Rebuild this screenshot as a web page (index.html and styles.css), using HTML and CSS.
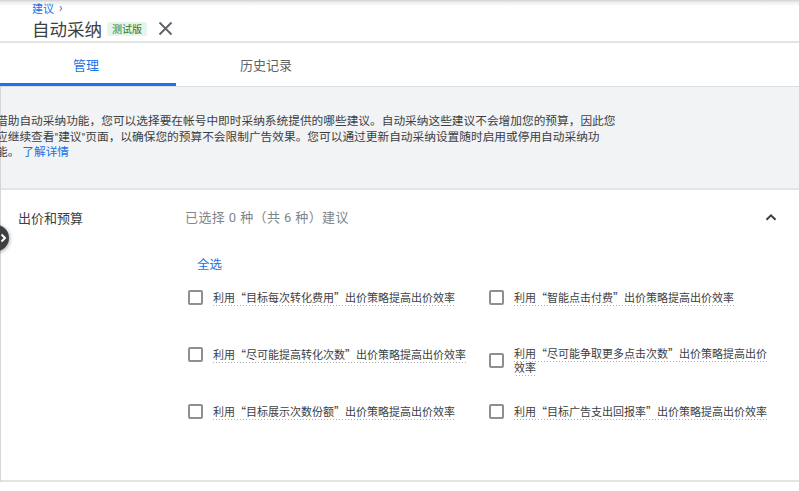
FILE: index.html
```html
<!DOCTYPE html>
<html lang="zh-CN">
<head>
<meta charset="utf-8">
<title>自动采纳</title>
<link rel="stylesheet" href="styles.css">
</head>
<body>
<div class="page">
  <header class="header">
    <div class="crumb"><a class="crumb-link">建议</a><span class="crumb-sep">›</span></div>
    <div class="title-row">
      <h1 class="title">自动采纳</h1>
      <span class="badge">测试版</span>
      <svg class="close" width="15" height="15" viewBox="0 0 15 15"><path d="M1.5 1.5 L13.5 13.5 M13.5 1.5 L1.5 13.5" stroke="#5f6368" stroke-width="1.9" fill="none"/></svg>
    </div>
  </header>

  <nav class="tabs">
    <div class="tab tab-active">管理</div>
    <div class="tab">历史记录</div>
  </nav>

  <main class="content">
    <section class="info">
      <p class="info-text">借助自动采纳功能，您可以选择要在帐号中即时采纳系统提供的哪些建议。自动采纳这些建议不会增加您的预算，因此您<br>应继续查看"建议"页面，以确保您的预算不会限制广告效果。您可以通过更新自动采纳设置随时启用或停用自动采纳功<br>能。 <a class="link">了解详情</a></p>
    </section>

    <section class="group">
      <div class="group-head">
        <div class="group-name">出价和预算</div>
        <div class="group-summary">已选择 0 种（共 6 种）建议</div>
        <svg class="chevron" width="12" height="8" viewBox="0 0 12 8"><path d="M1.5 6.8 L6 2.3 L10.5 6.8" stroke="#3c4043" stroke-width="2" fill="none"/></svg>
      </div>
      <div class="group-body">
        <div class="select-all">全选</div>
        <div class="options">
          <label class="option"><span class="box"></span><span class="opt-text"><span class="dotted">利用“目标每次转化费用”出价策略提高出价效率</span></span></label>
          <label class="option"><span class="box"></span><span class="opt-text"><span class="dotted">利用“智能点击付费”出价策略提高出价效率</span></span></label>
          <label class="option"><span class="box"></span><span class="opt-text"><span class="dotted">利用“尽可能提高转化次数”出价策略提高出价效率</span></span></label>
          <label class="option"><span class="box"></span><span class="opt-text"><span class="dotted">利用“尽可能争取更多点击次数”出价策略提高出价效率</span></span></label>
          <label class="option"><span class="box"></span><span class="opt-text"><span class="dotted">利用“目标展示次数份额”出价策略提高出价效率</span></span></label>
          <label class="option"><span class="box"></span><span class="opt-text"><span class="dotted">利用“目标广告支出回报率”出价策略提高出价效率</span></span></label>
        </div>
      </div>
    </section>
  </main>

  <button class="side-toggle" aria-label="展开">
    <svg width="8" height="10" viewBox="0 0 8 10"><path d="M1.5 1.5 L5 5 L1.5 8.5" stroke="#ffffff" stroke-width="2" fill="none"/></svg>
  </button>
</div>
</body>
</html>
```

FILE: styles.css
```css
html, body {
  margin: 0;
  padding: 0;
  background: #ffffff;
}

body {
  width: 799px;
  height: 491px;
  overflow: hidden;
  font-family: Roboto, "Noto Sans CJK SC", sans-serif;
  color: #3c4043;
}

.page {
  position: relative;
  height: 491px;
}

/* Header */
.header {
  height: 41px;
  padding-left: 32px;
  background: linear-gradient(#cfcfcf 0, #ececec 2px, #ffffff 6px);
  border-bottom: 2px solid #e4e4e4;
  box-sizing: content-box;
}

.crumb {
  height: 16px;
  font-size: 11px;
  line-height: 16px;
  display: flex;
  align-items: center;
  gap: 5px;
}

.crumb-link {
  color: #1a73e8;
  font-family: "Noto Sans CJK SC", sans-serif;
}

.crumb-sep {
  color: #5f6368;
  font-size: 12px;
}

.title-row {
  height: 25px;
  display: flex;
  align-items: center;
}

.title {
  margin: 0;
  font-size: 17.5px;
  font-weight: 400;
  line-height: 25px;
  color: #3c4043;
  font-family: "Noto Sans CJK SC", sans-serif;
}

.badge {
  margin-left: 5px;
  height: 14px;
  padding: 0 5px;
  background: #e6f4ea;
  color: #188038;
  font-size: 10px;
  line-height: 14px;
  border-radius: 2px;
  font-family: "Noto Sans CJK SC", sans-serif;
}

.close {
  margin-left: 11px;
}

/* Tabs */
.tabs {
  display: flex;
  margin-left: -4px;
  border-bottom: 1px solid #dadce0;
}

.tab {
  width: 180px;
  height: 43px;
  display: flex;
  align-items: center;
  justify-content: center;
  font-size: 13px;
  color: #5f6368;
  font-family: "Noto Sans CJK SC", sans-serif;
  position: relative;
}

.tab-active {
  color: #1a73e8;
}

.tab-active::after {
  content: "";
  position: absolute;
  left: 0;
  right: 0;
  bottom: 0;
  height: 3px;
  background: #1a73e8;
}

/* Content */
.content {
  border-left: 1px solid #d6d6d6;
}

.info {
  background: #f1f3f4;
  padding: 27px 0 27px;
  border-bottom: 2px solid #e4e4e4;
}

.info-text {
  margin: 0 0 0 -5px;
  font-size: 11.7px;
  line-height: 15.6px;
  color: #3c4043;
  white-space: nowrap;
}

.link {
  color: #1a73e8;
}

.group {
  border-bottom: 2px solid #e4e4e4;
}

.group-head {
  display: flex;
  align-items: center;
  padding: 19px 22px 0 17px;
  height: 17px;
  box-sizing: content-box;
}

.group-name {
  width: 167px;
  font-size: 13px;
  line-height: 17px;
  color: #3c4043;
  font-family: "Noto Sans CJK SC", sans-serif;
}

.group-summary {
  flex: 1;
  font-size: 13px;
  line-height: 17px;
  color: #80868b;
  letter-spacing: 0.4px;
}

.chevron {
  display: block;
}

.group-body {
  padding: 0 0 18.5px 187px;
}

.select-all {
  margin: 30px 0 0 9px;
  font-size: 12.5px;
  line-height: 16px;
  color: #1a73e8;
  font-family: "Noto Sans CJK SC", sans-serif;
}

.options {
  margin-top: 18.5px;
  display: grid;
  grid-template-columns: 301px 1fr;
  grid-auto-rows: 57px;
  align-items: start;
}

.option {
  display: flex;
  align-items: center;
}

.box {
  flex: none;
  width: 15px;
  height: 15px;
  box-sizing: border-box;
  border: 2px solid #8f8f8f;
  border-radius: 2px;
  margin-right: 10px;
}

.opt-text {
  max-width: 262px;
  font-family: "Noto Sans CJK SC", sans-serif;
  font-size: 11px;
  line-height: 13.5px;
  color: #3c4043;
}

.dotted {
  background-image: linear-gradient(to right, #b0b0b0 50%, transparent 50%);
  background-size: 3px 1px;
  background-repeat: repeat-x;
  background-position: 0 100%;
  padding-bottom: 1px;
}

/* Floating side toggle */
.side-toggle {
  position: absolute;
  left: -17px;
  top: 225px;
  width: 26px;
  height: 26px;
  padding: 0 0 0 17px;
  border: none;
  border-radius: 50%;
  background: #3c4043;
  box-shadow: 0 1px 4px rgba(0, 0, 0, 0.45);
  display: flex;
  align-items: center;
  justify-content: flex-start;
}

.side-toggle svg {
  display: block;
}
```
